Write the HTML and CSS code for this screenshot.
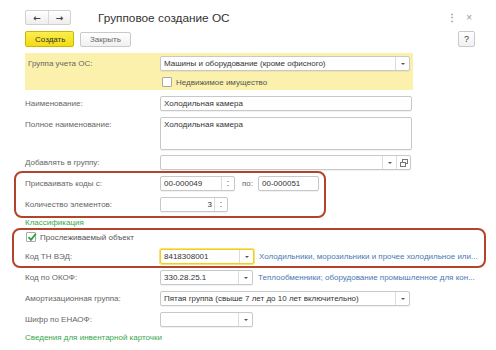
FILE: index.html
```html
<!DOCTYPE html>
<html>
<head>
  <title>Групповое создание ОС</title>
  <link rel="stylesheet" href="styles.css">
</head>
<body>
  <div class="page">
    <div class="header">
      <div class="nav">
        <button class="nav-btn">&#8592;</button>
        <button class="nav-btn">&#8594;</button>
      </div>
      <h1 class="title">Групповое создание ОС</h1>
      <div class="win-icons">
        <span class="more">&#8942;</span>
        <span class="close">&#215;</span>
      </div>
    </div>

    <div class="toolbar">
      <button class="btn primary">Создать</button>
      <button class="btn">Закрыть</button>
      <button class="btn help">?</button>
    </div>

    <div class="form">
      <div class="group-panel">
        <div class="row">
          <label class="label narrow">Группа учета ОС:</label>
          <div class="field combo w-250">
            <span class="value">Машины и оборудование (кроме офисного)</span>
            <span class="drop"><i class="tri"></i></span>
          </div>
        </div>
        <div class="check-row in-panel">
          <span class="checkbox"></span>
          <span>Недвижимое имущество</span>
        </div>
      </div>

      <div class="row">
        <label class="label">Наименование:</label>
        <div class="field w-252"><span class="value">Холодильная камера</span></div>
      </div>

      <div class="row">
        <label class="label">Полное наименование:</label>
        <div class="field textarea w-252"><span class="value">Холодильная камера</span></div>
      </div>

      <div class="row tight">
        <label class="label">Добавлять в группу:</label>
        <div class="field combo w-251">
          <span class="value"></span>
          <span class="drop"><i class="tri"></i></span>
          <span class="drop open">
            <svg width="8" height="8" viewBox="0 0 8 8">
              <rect x="2.5" y="0.5" width="5" height="4" fill="none" stroke="#777" stroke-width="1"/>
              <rect x="0.5" y="3.5" width="5" height="4" fill="#fff" stroke="#777" stroke-width="1"/>
            </svg>
          </span>
        </div>
      </div>

      <div class="row">
        <label class="label">Присваивать коды с:</label>
        <div class="field spin w-75">
          <span class="value">00-000049</span>
          <span class="spinner"><i class="up"></i><i class="down"></i></span>
        </div>
        <span class="inline-label">по:</span>
        <div class="field w-61"><span class="value">00-000051</span></div>
      </div>

      <div class="row">
        <label class="label">Количество элементов:</label>
        <div class="field spin w-68">
          <span class="value num">3</span>
          <span class="spinner"><i class="up"></i><i class="down"></i></span>
        </div>
      </div>

      <div class="section">Классификация</div>

      <div class="check-row">
        <span class="checkbox checked">
          <svg width="10" height="10" viewBox="0 0 10 10">
            <path d="M1.5 5.2 L4 7.8 L8.8 1.8" fill="none" stroke="#2f9e3f" stroke-width="1.8"/>
          </svg>
        </span>
        <span>Прослеживаемый объект</span>
      </div>

      <div class="row after-check">
        <label class="label">Код ТН ВЭД:</label>
        <div class="field combo focused w-94">
          <span class="value">8418308001</span>
          <span class="drop"><i class="tri"></i></span>
        </div>
        <span class="link">Холодильники, морозильники и прочее холодильное или...</span>
      </div>

      <div class="row">
        <label class="label">Код по ОКОФ:</label>
        <div class="field combo w-93">
          <span class="value">330.28.25.1</span>
          <span class="drop"><i class="tri"></i></span>
        </div>
        <span class="link">Теплообменники; оборудование промышленное для кон...</span>
      </div>

      <div class="row">
        <label class="label">Амортизационная группа:</label>
        <div class="field combo w-250">
          <span class="value">Пятая группа (свыше 7 лет до 10 лет включительно)</span>
          <span class="drop"><i class="tri"></i></span>
        </div>
      </div>

      <div class="row">
        <label class="label">Шифр по ЕНАОФ:</label>
        <div class="field combo w-93">
          <span class="value"></span>
          <span class="drop"><i class="tri"></i></span>
        </div>
      </div>

      <div class="section bottom">Сведения для инвентарной карточки</div>
    </div>
  </div>

  <div class="mark mark-codes"></div>
  <div class="mark mark-tnved"></div>
</body>
</html>
```

FILE: styles.css
```css
body {
  margin: 0;
  font-family: Arial, "Liberation Sans", sans-serif;
  font-size: 8px;
  color: #555;
  background: #fff;
}
.page {
  padding: 10px 21px 0 25px;
}

/* header */
.header {
  display: flex;
  align-items: center;
  height: 15px;
}
.nav {
  display: flex;
  height: 15px;
  border: 1px solid #cfcfcf;
  border-radius: 2px;
  box-sizing: border-box;
  background: linear-gradient(#fff, #eee);
}
.nav-btn {
  width: 22px;
  padding: 0;
  border: none;
  background: none;
  font-family: "DejaVu Sans", sans-serif;
  font-size: 9px;
  font-weight: bold;
  color: #444;
  line-height: 12px;
}
.nav-btn + .nav-btn {
  border-left: 1px solid #d8d8d8;
}
.title {
  margin: 0 0 0 27px;
  font-size: 11.8px;
  font-weight: normal;
  color: #333;
}
.win-icons {
  margin-left: auto;
  display: flex;
  gap: 9px;
  margin-right: 3px;
  color: #999;
}
.more {
  font-size: 10px;
  font-weight: bold;
}
.close {
  font-size: 10px;
}

/* toolbar */
.toolbar {
  display: flex;
  align-items: center;
  margin-top: 6px;
  height: 16px;
}
.btn {
  height: 15px;
  padding: 0 9px;
  border: 1px solid #c9c9c9;
  border-radius: 2px;
  background: linear-gradient(#fff, #f0f0f0);
  font-family: Arial, "Liberation Sans", sans-serif;
  font-size: 8px;
  color: #666;
  box-sizing: border-box;
}
.btn + .btn {
  margin-left: 6px;
}
.btn.primary {
  height: 16px;
  width: 49px;
  border-color: #c9b800;
  background: linear-gradient(#fbee4f, #f2dc12);
  color: #333;
}
.btn.help {
  margin-left: auto;
  width: 17px;
  height: 16px;
  padding: 0;
  color: #333;
  font-size: 9px;
}

/* form */
.form {
  margin-top: 6px;
}
.group-panel {
  width: 388px;
  padding: 3px;
  box-sizing: border-box;
  background: #fbf1ac;
}
.group-panel .row {
  margin-top: 0;
}
.row {
  display: flex;
  align-items: flex-start;
  margin-top: 6px;
}
.row.tight {
  margin-top: 5px;
}
.row.after-check {
  margin-top: 7px;
}
.label {
  width: 135px;
  flex: none;
  line-height: 15px;
  color: #666;
}
.label.narrow {
  width: 132px;
}
.field {
  display: flex;
  flex: none;
  height: 15px;
  border: 1px solid #c8c8c8;
  border-radius: 2px;
  background: #fff;
  box-sizing: border-box;
  box-shadow: 0 1px 1px rgba(0, 0, 0, 0.06);
  color: #333;
}
.field .value {
  flex: 1;
  padding: 0 3px;
  line-height: 13px;
  white-space: nowrap;
  overflow: hidden;
}
.field .value.num {
  text-align: right;
  padding-right: 2px;
}
.field.textarea {
  height: 33px;
}
.field.focused {
  border-color: #f1cf1a;
  box-shadow: 0 0 0 1px #f7e27a;
}
.drop {
  width: 13px;
  flex: none;
  display: flex;
  align-items: center;
  justify-content: center;
  border-left: 1px solid #dcdcdc;
}
.tri {
  width: 0;
  height: 0;
  border-left: 2px solid transparent;
  border-right: 2px solid transparent;
  border-top: 2px solid #555;
}
.spinner {
  width: 13px;
  flex: none;
  display: flex;
  flex-direction: column;
  align-items: center;
  justify-content: space-around;
  border-left: 1px solid #dcdcdc;
  padding: 2px 0;
  box-sizing: border-box;
}
.spinner .up {
  width: 0;
  height: 0;
  border-left: 1.5px solid transparent;
  border-right: 1.5px solid transparent;
  border-bottom: 1.5px solid #666;
}
.spinner .down {
  width: 0;
  height: 0;
  border-left: 1.5px solid transparent;
  border-right: 1.5px solid transparent;
  border-top: 1.5px solid #666;
}
.inline-label {
  margin: 0 5px 0 7px;
  line-height: 15px;
  color: #666;
}
.link {
  margin-left: 5px;
  line-height: 15px;
  color: #4a78b3;
  white-space: nowrap;
}
.w-250 { width: 250px; }
.w-251 { width: 251px; }
.w-252 { width: 252px; }
.w-94 { width: 94px; }
.w-93 { width: 93px; }
.w-75 { width: 75px; }
.w-68 { width: 68px; }
.w-61 { width: 61px; }

.check-row {
  display: flex;
  align-items: center;
  height: 10px;
  margin-top: 4px;
  padding-left: 1px;
  color: #555;
}
.check-row.in-panel {
  margin-top: 6px;
  padding-left: 134px;
}
.checkbox {
  width: 10px;
  height: 10px;
  margin-right: 4px;
  border: 1px solid #a9a9a9;
  border-radius: 1px;
  background: #fff;
  box-sizing: border-box;
  position: relative;
}
.checkbox svg {
  position: absolute;
  left: 0;
  top: -1px;
}
.section {
  margin-top: 6px;
  line-height: 10px;
  color: #3aa64c;
}
.section.bottom {
  margin-top: 6px;
}

/* annotation frames */
.mark {
  position: absolute;
  border: 2px solid #b4432b;
  border-radius: 8px;
  box-sizing: border-box;
}
.mark-codes {
  left: 14px;
  top: 171px;
  width: 312px;
  height: 47px;
}
.mark-tnved {
  left: 12px;
  top: 228px;
  width: 474px;
  height: 40px;
}
```
